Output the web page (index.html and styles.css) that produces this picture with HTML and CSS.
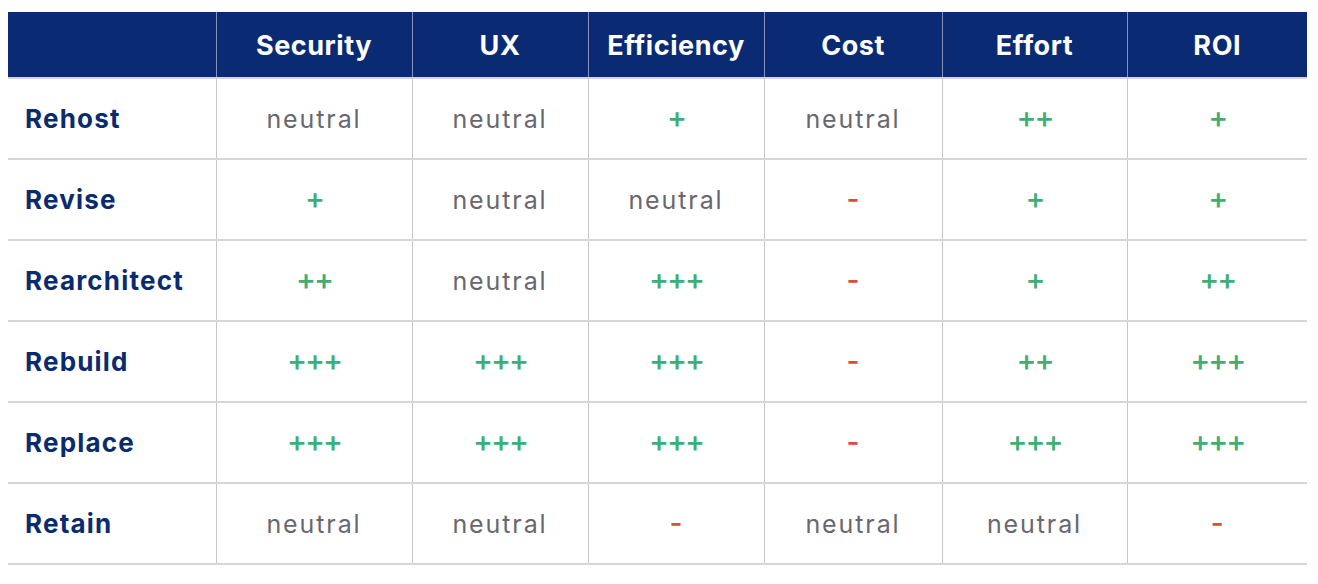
FILE: index.html
```html
<!DOCTYPE html>
<html>
<head>
<meta charset="utf-8">
<link rel="stylesheet" href="styles.css">
</head>
<body>
<table class="matrix">
  <colgroup>
    <col class="c-label">
    <col class="c-sec">
    <col class="c-ux">
    <col class="c-eff">
    <col class="c-cost">
    <col class="c-effort">
    <col class="c-roi">
  </colgroup>
  <thead>
    <tr>
      <th class="corner"></th>
      <th>Security</th>
      <th>UX</th>
      <th>Efficiency</th>
      <th>Cost</th>
      <th>Effort</th>
      <th>ROI</th>
    </tr>
  </thead>
  <tbody>
    <tr>
      <th class="label">Rehost</th>
      <td class="neu">neutral</td><td class="neu">neutral</td><td class="pos">+</td><td class="neu">neutral</td><td class="pos">++</td><td class="pos">+</td>
    </tr>
    <tr>
      <th class="label">Revise</th>
      <td class="pos">+</td><td class="neu">neutral</td><td class="neu">neutral</td><td class="neg">-</td><td class="pos">+</td><td class="pos">+</td>
    </tr>
    <tr>
      <th class="label">Rearchitect</th>
      <td class="pos">++</td><td class="neu">neutral</td><td class="pos">+++</td><td class="neg">-</td><td class="pos">+</td><td class="pos">++</td>
    </tr>
    <tr>
      <th class="label">Rebuild</th>
      <td class="pos">+++</td><td class="pos">+++</td><td class="pos">+++</td><td class="neg">-</td><td class="pos">++</td><td class="pos">+++</td>
    </tr>
    <tr>
      <th class="label">Replace</th>
      <td class="pos">+++</td><td class="pos">+++</td><td class="pos">+++</td><td class="neg">-</td><td class="pos">+++</td><td class="pos">+++</td>
    </tr>
    <tr>
      <th class="label">Retain</th>
      <td class="neu">neutral</td><td class="neu">neutral</td><td class="neg">-</td><td class="neu">neutral</td><td class="neu">neutral</td><td class="neg">-</td>
    </tr>
  </tbody>
</table>
</body>
</html>
```

FILE: styles.css
```css
html, body {
  margin: 0;
  padding: 0;
  background: #ffffff;
}
body {
  padding: 12px 0 0 8px;
  font-family: Inter, "Liberation Sans", sans-serif;
}
.matrix {
  border-collapse: collapse;
  table-layout: fixed;
  width: 1299px;
}
.c-label { width: 208px; }
.c-sec { width: 196px; }
.c-ux { width: 176px; }
.c-eff { width: 176px; }
.c-cost { width: 178px; }
.c-effort { width: 185px; }
.c-roi { width: 180px; }

.matrix thead th {
  height: 63px;
  padding: 2px 0 0 0;
  background: #0a2b74;
  color: #ffffff;
  font-weight: 700;
  font-size: 27px;
  letter-spacing: 0.55px;
  text-align: center;
  vertical-align: middle;
  border-left: 1px solid #8593b8;
  border-bottom: 2px solid #d4d4d9;
}
.matrix thead th.corner {
  border-left: none;
}
.matrix tbody th,
.matrix tbody td {
  height: 79px;
  padding: 0;
  vertical-align: middle;
  border-bottom: 2px solid #d6d6da;
}
.matrix tbody td {
  text-align: center;
  border-left: 1px solid #c6c6cb;
}
.matrix tbody th.label {
  text-align: left;
  padding-left: 17px;
  color: #0a2b6e;
  font-weight: 700;
  font-size: 26px;
  letter-spacing: 1.2px;
}
.neu {
  color: #68676f;
  font-weight: 400;
  font-size: 25px;
  letter-spacing: 1.9px;
}
.matrix tbody td.pos {
  color: #3fae74;
  font-weight: 500;
  font-size: 30px;
  letter-spacing: -2px;
  padding-bottom: 4px;
  height: 75px;
}
.matrix tbody td.neg {
  color: #e2493b;
  font-weight: 500;
  font-size: 28px;
  padding-bottom: 2px;
  height: 77px;
}
```
